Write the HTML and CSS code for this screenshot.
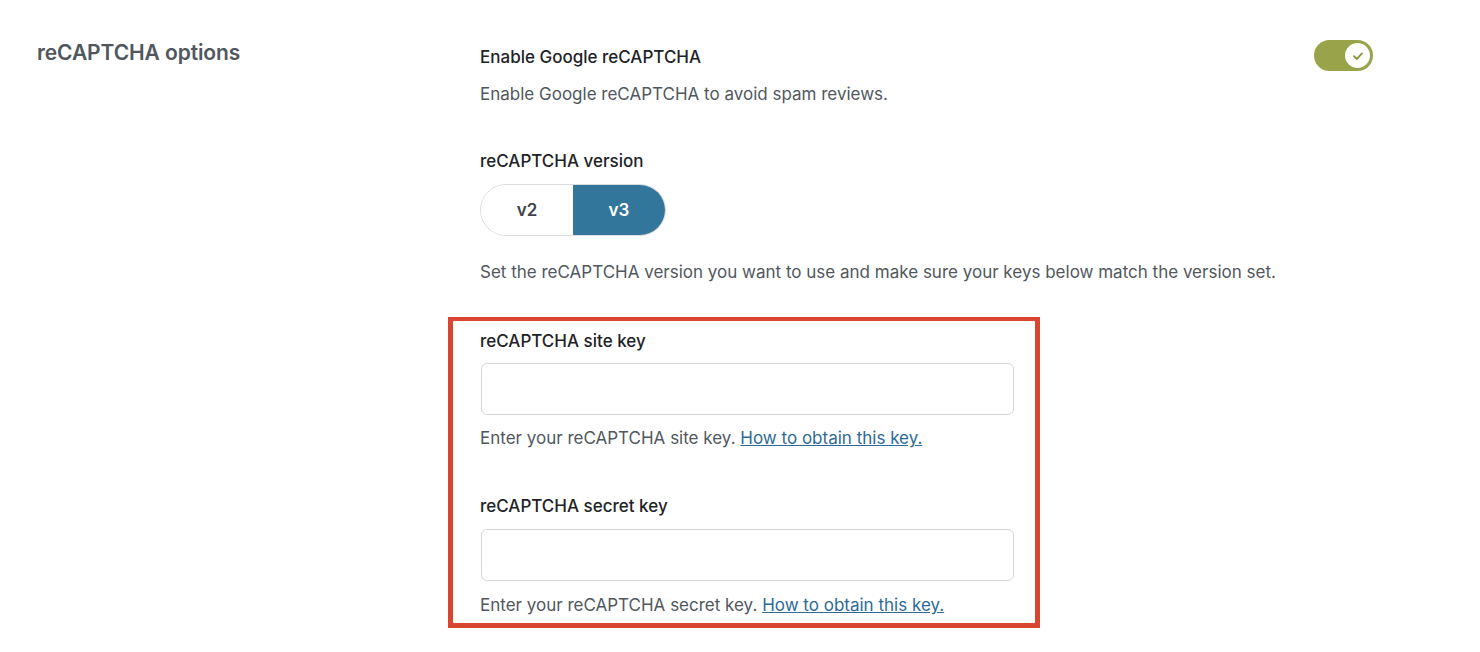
FILE: index.html
```html
<!DOCTYPE html>
<html lang="en">
<head>
<meta charset="utf-8">
<title>reCAPTCHA options</title>
<link rel="stylesheet" href="styles.css">
</head>
<body>
<div class="page">
  <div class="side">
    <h2 class="side-title">reCAPTCHA options</h2>
  </div>
  <div class="main">
    <div class="row-head">
      <div class="label">Enable Google reCAPTCHA</div>
      <span class="toggle" role="switch" aria-checked="true">
        <span class="knob">
          <svg width="12" height="10" viewBox="0 0 12 10"><path d="M2 5.2 L4.8 8 L10 2.4" fill="none" stroke="#8f9a3e" stroke-width="1.9" stroke-linecap="round" stroke-linejoin="round"/></svg>
        </span>
      </span>
    </div>
    <p class="desc first-desc">Enable Google reCAPTCHA to avoid spam reviews.</p>

    <div class="label version-label">reCAPTCHA version</div>
    <div class="segmented">
      <span class="seg">v2</span>
      <span class="seg seg-active">v3</span>
    </div>
    <p class="desc version-desc">Set the reCAPTCHA version you want to use and make sure your keys below match the version set.</p>

    <div class="keys-box">
      <div class="label">reCAPTCHA site key</div>
      <input class="text-input" type="text">
      <p class="desc field-desc">Enter your reCAPTCHA site key. <a href="#">How to obtain this key.</a></p>

      <div class="label secret-label">reCAPTCHA secret key</div>
      <input class="text-input secret-input" type="text">
      <p class="desc field-desc last-desc">Enter your reCAPTCHA secret key. <a href="#">How to obtain this key.</a></p>
    </div>
  </div>
</div>
</body>
</html>
```

FILE: styles.css
```css
html, body {
  margin: 0;
  padding: 0;
  background: #ffffff;
}

body {
  font-family: Inter, "Liberation Sans", Arial, sans-serif;
  color: #1d2327;
  font-size: 17px;
  line-height: 24px;
}

.page {
  display: flex;
  align-items: flex-start;
}

.side {
  width: 480px;
  flex: none;
  padding-left: 37px;
  box-sizing: border-box;
  padding-top: 39px;
}

.side-title {
  margin: 0;
  font-size: 21px;
  line-height: 28px;
  font-weight: 600;
  color: #50575e;
  letter-spacing: -0.1px;
}

.main {
  width: 893px;
  padding-top: 40px;
}

.row-head {
  display: flex;
  justify-content: space-between;
  align-items: center;
  height: 31px;
}

.row-head .label {
  padding-top: 2px;
}

.label {
  font-size: 17px;
  line-height: 24px;
  font-weight: 500;
  color: #1d2327;
}

.toggle {
  width: 59px;
  height: 31px;
  border-radius: 16px;
  background: #99a34a;
  display: flex;
  align-items: center;
  justify-content: flex-end;
  padding-right: 3px;
  box-sizing: border-box;
}

.knob {
  width: 25px;
  height: 25px;
  border-radius: 50%;
  background: #ffffff;
  display: flex;
  align-items: center;
  justify-content: center;
}

.desc {
  margin: 0;
  font-size: 17px;
  line-height: 24px;
  color: #50575e;
}

.first-desc {
  margin-top: 11px;
}

.version-label {
  margin-top: 43px;
}

.segmented {
  display: flex;
  width: 186px;
  height: 52px;
  margin-top: 11px;
  border-radius: 26px;
  overflow: hidden;
  border: 1px solid #dcdcde;
  box-sizing: border-box;
}

.seg {
  flex: 1;
  display: flex;
  align-items: center;
  justify-content: center;
  font-size: 17px;
  font-weight: 600;
  color: #3c434a;
  background: #ffffff;
}

.seg-active {
  background: #33769c;
  color: #ffffff;
}

.version-desc {
  margin-top: 24px;
}

.keys-box {
  margin-top: 33px;
  margin-left: -32px;
  width: 592px;
  box-sizing: border-box;
  border: 5px solid #d9452f;
  border-top-width: 4px;
  padding: 7px 20px 6px 27px;
  display: flex;
  flex-direction: column;
  align-items: flex-start;
}

.keys-box .label {
  padding-top: 1px;
}

.text-input {
  display: block;
  margin: 10px 0 0 1px;
  width: 533px;
  height: 52px;
  box-sizing: border-box;
  border: 1px solid #d3d6da;
  border-radius: 6px;
  background: #ffffff;
  font: inherit;
  padding: 0 12px;
}

.secret-input {
  margin-top: 11px;
}

.field-desc {
  margin-top: 11px;
}

.last-desc {
  margin-top: 12px;
}

.field-desc a {
  color: #2d6a96;
  text-decoration: underline;
}

.secret-label {
  margin-top: 43px;
}
```
